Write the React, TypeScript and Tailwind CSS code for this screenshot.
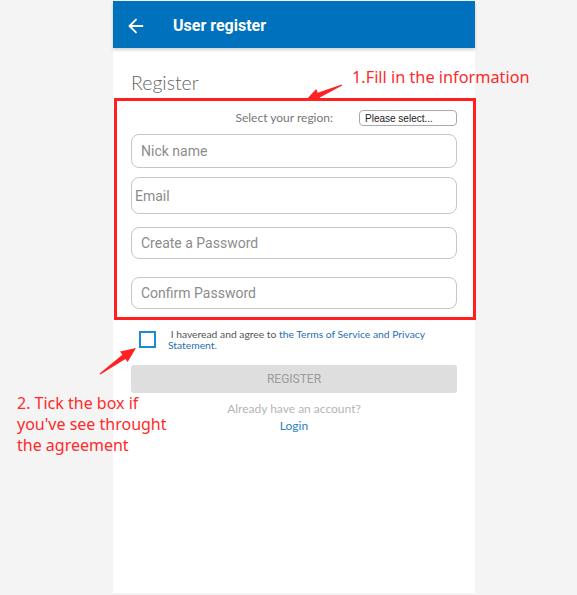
import { ArrowLeft } from 'lucide-react';

type Pt = [number, number];

// tapered annotation arrow, from tail to tip
function arrowPoints(tail: Pt, tip: Pt) {
  const dx = tip[0] - tail[0];
  const dy = tip[1] - tail[1];
  const len = Math.hypot(dx, dy);
  const ux = dx / len;
  const uy = dy / len;
  const nx = -uy;
  const ny = ux;
  const neck: Pt = [tip[0] - ux * 15, tip[1] - uy * 15];
  const p = (b: Pt, w: number) => `${b[0] + nx * w},${b[1] + ny * w}`;
  return [
    p(tail, 0.6),
    p(neck, 2.6),
    p(neck, 6.5),
    `${tip[0]},${tip[1]}`,
    p(neck, -6.5),
    p(neck, -2.6),
    p(tail, -0.6),
  ].join(' ');
}

const fields = [
  { placeholder: 'Nick name', className: 'mt-[8px] h-[34px] pl-[9px]' },
  { placeholder: 'Email', className: 'mt-[9px] h-[37px] pl-[3px]' },
  { placeholder: 'Create a Password', className: 'mt-[13px] h-[32px] pl-[9px]' },
  { placeholder: 'Confirm Password', className: 'mt-[18px] h-[32px] pl-[9px]' },
];

export default function App() {
  return (
    <div className="relative h-[595px] w-full overflow-hidden bg-[#f4f4f4]">
      <div className="ml-[113px] mt-px flex h-[592px] w-[362px] flex-col bg-white">
        <div className="relative z-10 flex h-[47px] items-center bg-[#0071bc] pt-[2px] shadow-[0_2px_3px_rgba(0,0,0,0.18)]">
          <ArrowLeft className="ml-[12px] h-[22px] w-[22px] text-white" strokeWidth={2} />
          <span className="ml-[26px] font-['Roboto',sans-serif] text-[16px] font-bold text-white">
            User register
          </span>
        </div>

        <div className="flex flex-col px-[18px]">
          <h1 className="mt-[21px] font-['Lato',sans-serif] text-[19.5px] font-light leading-[28px] text-[#666]">
            Register
          </h1>

          <div className="mt-[13px] flex h-[16px] items-center justify-end">
            <span className="font-['Lato',sans-serif] text-[12px] text-[#777]">Select your region:</span>
            <div className="ml-[26px] flex h-[16px] w-[98px] items-center rounded-[4px] border border-[#aaa] pl-[5px] font-['Liberation_Sans',sans-serif] text-[10px] text-[#222]">
              Please select...
            </div>
          </div>

          {fields.map((f) => (
            <input
              key={f.placeholder}
              placeholder={f.placeholder}
              className={`${f.className} w-full rounded-[8px] border border-[#c6c6c6] bg-white font-['Roboto',sans-serif] text-[14px] text-[#333] outline-none placeholder:text-[#8c8c8c]`}
            />
          ))}

          <div className="mt-[22px] flex items-start">
            <div className="ml-[8px] h-[17px] w-[17px] shrink-0 border-2 border-[#1b8ad8]" />
            <p className="ml-[12px] mt-[-2px] w-[266px] font-['Lato',sans-serif] text-[10.3px] leading-[11px] text-[#555]">
              {'\u00a0'}I haveread and agree to{' '}
              <span className="text-[#1f6fb5]">the Terms of Service and Privacy Statement.</span>
            </p>
          </div>

          <button className="mt-[14px] h-[28px] w-full rounded-[3px] bg-[#dedede] font-['Roboto',sans-serif] text-[12px] text-[#9c9c9c]">
            REGISTER
          </button>

          <p className="mt-[8px] text-center font-['Lato',sans-serif] text-[12px] leading-[16px] text-[#b5b5b5]">
            Already have an account?
          </p>
          <p className="mt-px text-center font-['Lato',sans-serif] text-[12px] leading-[16px] text-[#2a7fc0]">
            Login
          </p>
        </div>
      </div>

      {/* annotations laid over the screenshot */}
      <div className="pointer-events-none absolute left-[114px] top-[98px] h-[222px] w-[362px] border-[3px] border-[#ff1f1f]" />
      <span className="absolute left-[352px] top-[66px] font-['Noto_Sans',sans-serif] text-[16.3px] leading-[22px] text-[#ff2a2a]">
        1.Fill in the information
      </span>
      <p className="absolute left-[17px] top-[393px] w-[170px] font-['Noto_Sans',sans-serif] text-[16px] leading-[21px] text-[#ff2a2a]">
        2. Tick the box if
        <br />
        you've see throught
        <br />
        the agreement
      </p>
      <svg className="pointer-events-none absolute left-0 top-0" width={577} height={595}>
        <polygon points={arrowPoints([342, 85], [305, 101])} fill="#ff2222" />
        <polygon points={arrowPoints([100, 374], [136, 348])} fill="#ff2222" />
      </svg>
    </div>
  );
}
